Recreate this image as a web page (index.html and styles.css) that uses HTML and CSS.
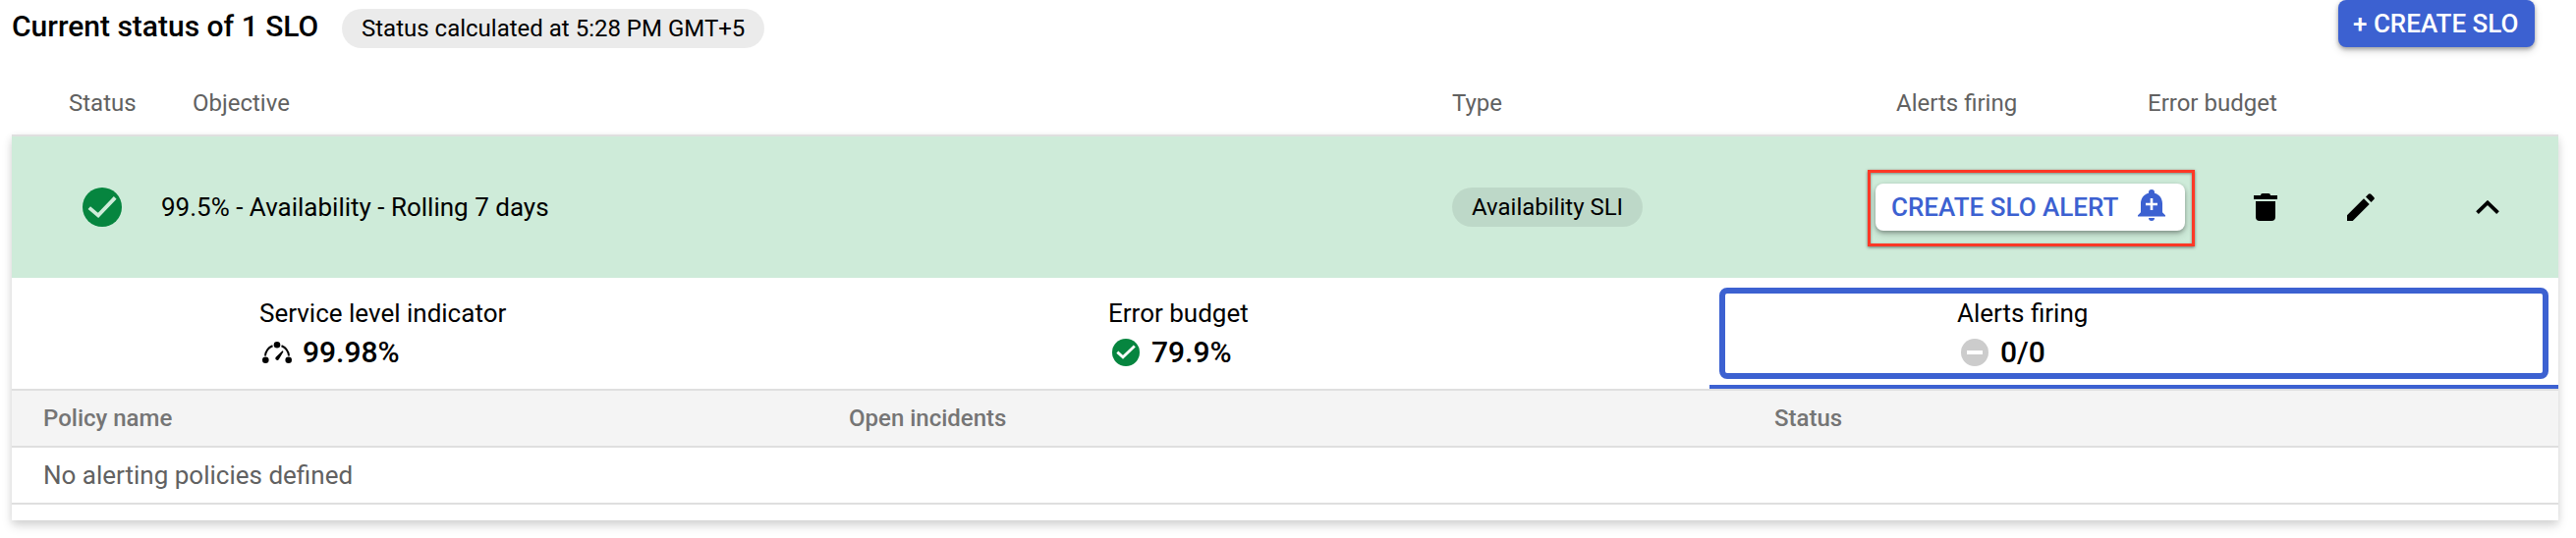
FILE: index.html
```html
<!DOCTYPE html>
<html lang="en">
<head>
<meta charset="utf-8">
<title>Current status of 1 SLO</title>
<link rel="stylesheet" href="styles.css">
</head>
<body>
<header class="topbar">
  <h1 class="title">Current status of 1 SLO</h1>
  <span class="chip chip-time">Status calculated at 5:28 PM GMT+5</span>
  <button class="btn btn-primary">+ CREATE SLO</button>
</header>
<div class="columns">
  <span>Status</span><span>Objective</span><span>Type</span><span>Alerts firing</span><span>Error budget</span>
</div>
<main class="card">
  <section class="slo-row">
    <svg class="icon-status" viewBox="2 2 20 20"><circle cx="12" cy="12" r="10" fill="#06853f"/><path d="M5.4 12.3 10 16.2 18.6 7.2" fill="none" stroke="#ceebd9" stroke-width="1.9"/></svg>
    <span class="objective">99.5% - Availability - Rolling 7 days</span>
    <div class="type"><span class="chip chip-type">Availability SLI</span></div>
    <div class="alert-cell">
      <button class="btn btn-alert"><span>CREATE SLO ALERT</span>
        <svg class="icon-bell" viewBox="0 0 28 32"><path d="M14 0a3 3 0 0 1 3 3v.8c5 1.3 8 5.500 8 10.500v9l3 3V27.500H0v-1.200l3-3v-9C3 9.300 6 5.100 11 3.800V3a3 3 0 0 1 3-3z" fill="#3c61d1"/><path d="M11 29h6a3 3 0 0 1-6 0z" fill="#3c61d1"/><path d="M14 9v12M8 15h12" stroke="#fff" stroke-width="2.600"/></svg>
      </button>
      <div class="highlight"></div>
    </div>
    <svg class="icon-delete" viewBox="0 0 24 28"><path d="M0 2h7q0-2 2-2h6q2 0 2 2h7v4H0zM2 8h20v16q0 4-4 4H6q-4 0-4-4z"/></svg>
    <svg class="icon-edit" viewBox="0 0 28 28"><path d="M0 28v-5.700L17 5.300 22.700 11 5.700 28zM19 3.500l2.700-2.700q1.300-1.300 2.600 0L27.200 3.700q1.300 1.300 0 2.600L24.500 9z"/></svg>
    <svg class="icon-collapse" viewBox="0 0 24 15"><path d="M1.500 12.700 12 2.500 22.500 12.700" fill="none" stroke="#000" stroke-width="3.800"/></svg>
  </section>
  <nav class="tabs">
    <div class="tab">
      <div class="tab-label">Service level indicator</div>
      <div class="tab-value"><svg class="icon-gauge" viewBox="0 0 30 22"><g fill="none" stroke="#000" stroke-width="2"><path d="M3 14.500C3.500 9.500 6 6 10.500 4.200M19.500 4.200C24 6 26.500 9.500 27 14.500"/></g><circle cx="15" cy="3.300" r="3.300"/><circle cx="3.300" cy="18.700" r="3.300"/><circle cx="26.700" cy="18.700" r="3.300"/><path d="M20.500 9.300q1.200.3.800 1.300l-4.600 7.700a2 2 0 0 1-3.200-2.300z"/></svg><span>99.98%</span></div>
    </div>
    <div class="tab">
      <div class="tab-label">Error budget</div>
      <div class="tab-value"><svg class="icon-small" viewBox="0 0 28 28"><circle cx="14" cy="14" r="14" fill="#06853f"/><path d="M5.300 13.600 11 18.800 22.800 7.500" fill="none" stroke="#fff" stroke-width="2.800"/></svg><span>79.9%</span></div>
    </div>
    <div class="tab tab-active">
      <div class="tab-label">Alerts firing</div>
      <div class="tab-value"><svg class="icon-small" viewBox="0 0 28 28"><circle cx="14" cy="14" r="14" fill="#ccc"/><path d="M6 12h16v4H6z" fill="#fff"/></svg><span>0/0</span></div>
    </div>
  </nav>
  <div class="policies">
    <div class="policy-head"><span>Policy name</span><span>Open incidents</span><span>Status</span></div>
    <div class="policy-empty">No alerting policies defined</div>
  </div>
</main>
</body>
</html>
```
FILE: styles.css
```css
* { box-sizing: border-box; }
body { margin: 0; height: 548px; overflow: hidden; background: #fff; color: #000; font: 26px/30px Roboto, sans-serif; }
svg { display: block; flex: none; }
.topbar { display: flex; align-items: flex-start; height: 81px; padding: 0 42px 0 12px; white-space: nowrap; }
.title { width: 336px; margin: 0; padding-top: 9px; font-size: 30px; line-height: 35px; font-weight: 500; }
.chip { display: inline-flex; align-items: center; height: 40px; padding: 0 20px; border-radius: 20px; font-size: 24px; background: rgba(0, 0, 0, .08); white-space: nowrap; }
.chip-time { width: 430px; margin-top: 9px; }
.chip-type { width: 194px; }
.btn { display: flex; align-items: center; height: 48px; padding: 0 16px; border: 0; border-radius: 8px; font: 500 26px/30px Roboto, sans-serif; box-shadow: 0 2px 4px rgba(0, 0, 0, .3), 0 4px 8px rgba(0, 0, 0, .14); white-space: nowrap; }
.btn-primary { width: 200px; margin-left: auto; padding-left: 15px; background: #3c61d1; color: #fff; }
.columns { display: grid; grid-template-columns: 126px 1282px 452px 256px 1fr; height: 56px; padding: 10px 0 0 70px; font-size: 24px; line-height: 28px; color: #616161; }
.card { width: 2592px; height: 393px; margin-left: 12px; border-top: 2px solid #dfdfdf; box-shadow: 0 6px 10px rgba(0, 0, 0, .13), 0 2px 8px rgba(0, 0, 0, .08); background: #fff; }
.slo-row { display: grid; grid-template-columns: 80px 1314px 431px 385px 95px 131px 1fr; align-items: center; height: 144px; padding-left: 72px; background: #ceebd9; }
.icon-status { width: 40px; height: 40px; }
.type { display: flex; }
.alert-cell { position: relative; }
.btn-alert { width: 315px; background: #fff; color: #3c61d1; justify-content: space-between; padding-right: 20px; }
.icon-bell { width: 28px; height: 32px; margin-top: -4px; }
.highlight { position: absolute; left: -8px; top: -14px; width: 333px; height: 78px; border: 3px solid #ff3826; box-shadow: 0 1px 3px rgba(0, 0, 0, .5), inset 0 1px 3px rgba(0, 0, 0, .4); }
.icon-delete { width: 24px; height: 28px; }
.icon-edit { width: 28px; height: 28px; }
.icon-collapse { width: 24px; height: 15px; }
.tabs { display: grid; grid-template-columns: repeat(3, 1fr); height: 115px; border-bottom: 2px solid #dfdfdf; }
.tab { padding: 21px 0 0 252px; }
.tab-active { position: relative; border-bottom: 4px solid #3c61d1; }
.tab-active::before { content: ""; position: absolute; inset: 10px 10px 6px 10px; border: 6px solid #3c61d1; border-radius: 8px; }
.tab-label { line-height: 30px; }
.tab-value { display: flex; align-items: center; height: 40px; margin-top: 5px; font-size: 30px; font-weight: 500; }
.tab-value span { margin-left: 12px; }
.icon-small { width: 28px; height: 28px; margin: 0 0 0 4px; }
.icon-gauge { width: 30px; height: 22px; margin: 0 -1px 0 3px; }
.policy-head { display: grid; grid-template-columns: 820px 942px 1fr; align-items: center; height: 58px; padding-left: 32px; background: #f4f4f4; border-bottom: 2px solid #dfdfdf; color: #757575; font-size: 24px; font-weight: 500; }
.policy-empty { display: flex; align-items: center; height: 58px; padding-left: 32px; border-bottom: 2px solid #dfdfdf; color: #616161; }
```
